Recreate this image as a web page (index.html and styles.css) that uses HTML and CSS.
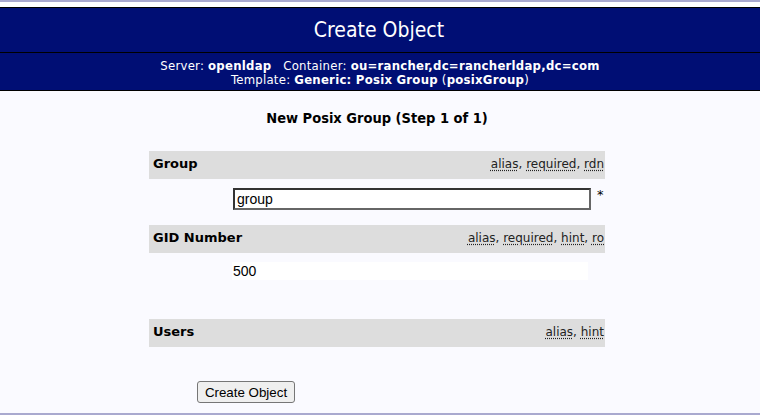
FILE: index.html
```html
<!DOCTYPE html>
<html>
<head>
<meta charset="utf-8">
<link rel="stylesheet" href="styles.css">
</head>
<body>
<div class="topline"></div>
<div class="gap"></div>
<div class="title">Create Object</div>
<div class="sub">
  <div>Server: <b>openldap</b>&nbsp;&nbsp; Container: <b>ou=rancher,dc=rancherldap,dc=com</b></div>
  <div>Template: <b>Generic: Posix Group</b> (<b>posixGroup</b>)</div>
</div>
<div class="step">New Posix Group (Step 1 of 1)</div>
<div class="form">
  <div class="hdr">
    <span class="label">Group</span>
    <span class="links"><u>alias</u>, <u>required</u>, <u>rdn</u></span>
  </div>
  <div class="val val-group">
    <input class="txt" type="text" value="group"><span class="star">*</span>
  </div>
  <div class="hdr">
    <span class="label">GID Number</span>
    <span class="links"><u>alias</u>, <u>required</u>, <u>hint</u>, <u>ro</u></span>
  </div>
  <div class="val val-gid">
    <div class="ro">500</div>
  </div>
  <div class="hdr">
    <span class="label">Users</span>
    <span class="links"><u>alias</u>, <u>hint</u></span>
  </div>
  <div class="val val-btn">
    <button class="btn">Create Object</button>
  </div>
</div>
<div class="bottomline"></div>
</body>
</html>
```
FILE: styles.css
```css
html, body {
  margin: 0;
  padding: 0;
}
body {
  background: #fafaff;
  width: 760px;
  height: 415px;
  position: relative;
  overflow: hidden;
  font-family: "DejaVu Sans", Verdana, sans-serif;
  color: #000;
}
.topline {
  height: 2px;
  background: #a9a9cf;
}
.gap {
  height: 5px;
  background: #ffffff;
}
.title {
  background: #000e74;
  color: #fff;
  border-top: 1px solid #000;
  border-bottom: 1px solid #000;
  height: 44px;
  line-height: 44px;
  text-align: center;
  font-family: "DejaVu Sans Condensed", "DejaVu Sans", sans-serif;
  font-size: 21px;
  padding-right: 2px;
}
.sub {
  background: #000e74;
  color: #fff;
  border-bottom: 1px solid #000;
  height: 38px;
  padding-top: 6px;
  box-sizing: border-box;
  text-align: center;
  font-family: "DejaVu Sans Condensed", "DejaVu Sans", sans-serif;
  font-size: 13px;
  letter-spacing: 0.25px;
  line-height: 14px;
}
.sub b {
  font-weight: bold;
}
.step {
  text-align: center;
  font-family: "DejaVu Sans Condensed", "DejaVu Sans", sans-serif;
  font-weight: bold;
  font-size: 14.5px;
  line-height: 16px;
  margin-top: 19px;
  margin-right: 6px;
}
.form {
  width: 456px;
  margin-left: 149px;
  margin-top: 25px;
}
.hdr {
  background: #dddddd;
  height: 28px;
  display: flex;
  align-items: center;
  justify-content: space-between;
  padding-left: 4px;
  padding-right: 1px;
  padding-bottom: 3px;
  box-sizing: border-box;
}
.label {
  font-weight: bold;
  font-size: 13px;
}
.links {
  font-size: 12px;
  color: #222;
}
.links u {
  text-decoration: underline dotted;
  text-underline-offset: 2px;
}
.val {
  padding-left: 84px;
  box-sizing: border-box;
}
.val-group {
  height: 46px;
  padding-top: 9px;
  display: flex;
  align-items: flex-start;
}
.txt {
  width: 358px;
  height: 22px;
  box-sizing: border-box;
  border: 2px solid #333;
  border-right-color: #666;
  border-bottom-color: #666;
  margin: 0;
  padding: 0 2px;
  font-family: "Liberation Sans", Arial, sans-serif;
  font-size: 14px;
  background: #fff;
}
.star {
  font-size: 13px;
  margin-left: 6px;
  margin-top: -1px;
}
.val-gid {
  height: 66px;
  padding-top: 9px;
  padding-left: 83px;
}
.ro {
  width: 355px;
  height: 18px;
  background: #fff;
  font-family: "Liberation Sans", Arial, sans-serif;
  font-size: 14px;
  line-height: 18px;
  padding-left: 1px;
}
.val-btn {
  padding-left: 48px;
  padding-top: 34px;
}
.btn {
  font-family: "Liberation Sans", Arial, sans-serif;
  font-size: 13.33px;
  height: 22px;
  width: 98px;
  padding: 0;
  border: 1px solid #767676;
  border-radius: 3px;
  background: #efefef;
  color: #000;
}
.bottomline {
  position: absolute;
  left: 0;
  right: 0;
  bottom: 0;
  height: 2px;
  background: #a9a9cf;
}
```
